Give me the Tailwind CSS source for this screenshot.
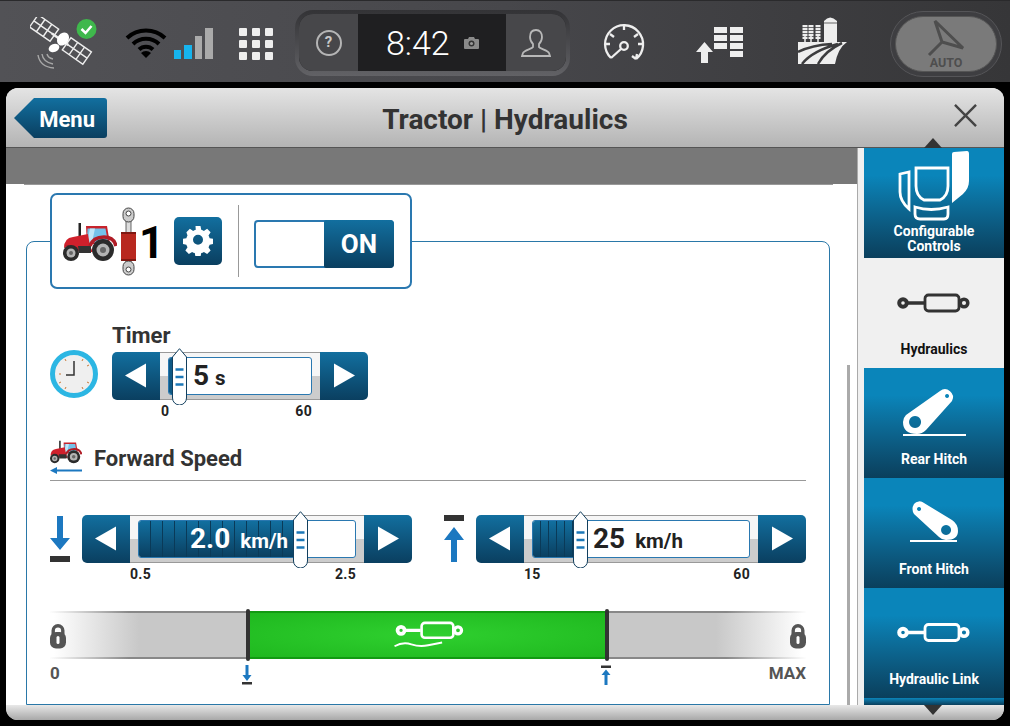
<!DOCTYPE html>
<html>
<head>
<meta charset="utf-8">
<script src="https://cdn.jsdelivr.net/npm/@tailwindcss/browser@4"></script>
</head>
<body class="m-0 bg-black">
<svg class="hidden" width="0" height="0">
  <defs>
    <symbol id="tractor" viewBox="0 0 54 40">
      <rect x="15.500" y="1" width="2.500" height="17" fill="#222"/>
      <path d="M23 4h21l3 18H24z" fill="#c8232c"/>
      <path d="M24.500 6.500h18l2.500 14H24z" fill="#74c2ea"/>
      <path d="M27 6.500h5l-3 14h-5z" fill="#bfe6f7"/>
      <path d="M1 26q0-10 9-11l15-3 2 12 3 6H16Q14 24 6 24z" fill="#d0202c"/>
      <path d="M1 24q6-2 12 1l2 4-2 0q-3-5-9-5z" fill="#a31a24"/>
      <path d="M15 24h13v7H16z" fill="#333"/>
      <path d="M27 24q3-9 14-9 10 0 12 9" fill="none" stroke="#b01c26" stroke-width="3.500"/>
      <circle cx="40" cy="28" r="11" fill="#2b2b2b"/><circle cx="40" cy="28" r="6.500" fill="#b4b4b4"/><circle cx="40" cy="28" r="3" fill="#666"/>
      <circle cx="8" cy="31" r="8" fill="#2b2b2b"/><circle cx="8" cy="31" r="4.500" fill="#b4b4b4"/><circle cx="8" cy="31" r="2" fill="#666"/>
    </symbol>
    <symbol id="cyl" viewBox="0 0 140 20">
      <circle cx="39" cy="10" r="3.800" fill="none" stroke="currentColor" stroke-width="4"/>
      <path d="M43 10h17" stroke="currentColor" stroke-width="3.500"/>
      <rect x="61" y="2" width="34" height="16" rx="3.500" fill="none" stroke="currentColor" stroke-width="2.800"/>
      <path d="M95 10h2" stroke="currentColor" stroke-width="3.500"/>
      <circle cx="100" cy="10" r="3.800" fill="none" stroke="currentColor" stroke-width="3.500"/>
    </symbol>
    <symbol id="thumb" viewBox="0 0 15 57">
      <path d="M.5 9 7.5.7 14.5 9V50a6.500 6.500 0 0 1-14 0z" fill="#fff" stroke="#123f5e"/>
      <path d="M3.500 21.500h8M3.500 29h8M3.500 36.500h8" stroke="#1c78b8" stroke-width="2.500"/>
    </symbol>
    <symbol id="lock" viewBox="0 0 16 26">
      <path d="M3.200 11V7.500a4.800 4.800 0 0 1 9.600 0V11" fill="none" stroke="#555" stroke-width="3.400"/>
      <rect y="9" width="16" height="16.500" rx="6" fill="#555"/>
      <rect x="6.500" y="13" width="3" height="8" rx="1.500" fill="#fff"/>
    </symbol>
    <symbol id="left" viewBox="0 0 48 48"><path d="M13 23.500 34 11.500v24z" fill="#fff"/></symbol>
    <symbol id="right" viewBox="0 0 48 48"><path d="M35 23.500 14 11.500v24z" fill="#fff"/></symbol>
  </defs>
</svg>

<div class="w-[1010px] h-[726px] bg-black overflow-hidden flex flex-col font-['Roboto',sans-serif]">
  <!-- status bar -->
  <div class="h-[82px] shrink-0 relative flex items-center border-t border-[#2a2a2c] bg-linear-to-r from-[#525256] via-[#47474b] to-[#363638]">
    <svg class="ml-[30px] w-[72px] h-[56px] mt-[6px]" viewBox="30 16 72 56" fill="none">
      <g stroke="#eee" stroke-width="1.400">
        <g transform="rotate(35 60.500 38.500)">
          <rect x="28" y="31" width="25" height="15"/><path d="M36.300 31v15M44.600 31v15M28 38.500h25"/>
          <rect x="68" y="31" width="25" height="15"/><path d="M76.300 31v15M84.600 31v15M68 38.500h25"/>
          <path d="M50 38.500h20" stroke-width="2.500"/>
        </g>
      </g>
      <path d="M47 53q1 4 6 5M42 53q1 8 11 10M38 54q2 12 16 13" stroke="#a8a8a8" stroke-width="1.400"/>
      <ellipse cx="63" cy="38" rx="5.500" ry="7" transform="rotate(36 63 38)" fill="#fff"/>
      <ellipse cx="54" cy="47" rx="5.500" ry="4" fill="#fff" transform="rotate(-20 54 47)"/>
      <circle cx="86.500" cy="28" r="10" fill="#3fb84c"/>
      <path d="M81.500 28l4 4 6-7" stroke="#fff" stroke-width="2.500"/>
    </svg>
    <svg class="ml-[23px] w-[42px] h-[32px] mt-[2px]" viewBox="0 0 42 32" fill="none" stroke="#000" stroke-width="4">
      <path d="M2 11a28 28 0 0 1 38 0M8 17a19 19 0 0 1 26 0M14 22.500a10 10 0 0 1 14 0"/>
      <path d="M21 31l-5-5a7 7 0 0 1 10 0z" fill="#000" stroke="none"/>
    </svg>
    <div class="ml-[7px] flex items-end gap-[3px] h-[32px] mt-[2px]">
      <div class="w-[7px] h-[9px] bg-[#16b4ee]"></div>
      <div class="w-[8px] h-[14px] bg-[#16b4ee]"></div>
      <div class="w-[7px] h-[23px] bg-[#aaaaaa]"></div>
      <div class="w-[8px] h-[31px] bg-[#aaaaaa]"></div>
    </div>
    <div class="ml-[26px] grid grid-cols-[8px_8px_8px] gap-x-[5px] gap-y-[4px] mt-[5px]">
      <div class="h-[8px] rounded-[1px] bg-[#eeeeee]"></div><div class="h-[8px] rounded-[1px] bg-[#eeeeee]"></div><div class="h-[8px] rounded-[1px] bg-[#eeeeee]"></div>
      <div class="h-[8px] rounded-[1px] bg-[#eeeeee]"></div><div class="h-[8px] rounded-[1px] bg-[#eeeeee]"></div><div class="h-[8px] rounded-[1px] bg-[#eeeeee]"></div>
      <div class="h-[8px] rounded-[1px] bg-[#eeeeee]"></div><div class="h-[8px] rounded-[1px] bg-[#eeeeee]"></div><div class="h-[8px] rounded-[1px] bg-[#eeeeee]"></div>
    </div>
    <!-- clock pod -->
    <div class="ml-[22px] w-[275px] h-[66px] rounded-[18px] bg-linear-to-b from-[#333336] to-[#626266] p-[4px] pb-[5px] mt-[3px]">
      <div class="w-full h-full rounded-[14px] overflow-hidden flex bg-[#1f1f21]">
        <div class="w-[59px] flex items-center justify-center bg-[#47474a]">
          <div class="w-[26px] h-[26px] rounded-full border-2 border-[#b5b5b5] flex items-center justify-center text-[15px] font-bold text-[#c8c8c8]">?</div>
        </div>
        <div class="flex-1 flex items-center pl-[28px]">
          <span class="text-[34px] font-light leading-none text-white">8:42</span>
          <svg class="ml-[14px] w-[15px] h-[12px]" viewBox="0 0 15 12"><path d="M1 2h3l1-2h5l1 2h3q1 0 1 1v8q0 1-1 1H1q-1 0-1-1V3q0-1 1-1z" fill="#8a8a8a"/><circle cx="7.500" cy="6.500" r="3" fill="#333"/><circle cx="7.500" cy="6.500" r="1.500" fill="#999"/></svg>
        </div>
        <div class="w-[60px] flex items-center justify-center bg-[#47474a]">
          <svg class="w-[30px] h-[28px]" viewBox="0 0 30 28" fill="none" stroke="#b8b8b8" stroke-width="1.800"><path d="M15 1c-4 0-6 3-6 7 0 3 1 5 3 7v3c-1 2-9 3-10 6l-1 3h28l-1-3c-1-3-9-4-10-6v-3c2-2 3-4 3-7 0-4-2-7-6-7z"/></svg>
        </div>
      </div>
    </div>
    <svg class="ml-[33px] w-[42px] h-[40px] mt-[3px]" viewBox="0 0 42 40" fill="none" stroke="#eee" stroke-width="2.300">
      <path d="M8 35A19 19 0 1 1 33 36M33 36l-4-3M33 36l1-5"/><path d="M21 2v5M7 11l4 3M35 11l-4 3M2 21h5M40 21h-5"/>
      <circle cx="21" cy="23" r="3.800"/><path d="M18 26 8 35"/>
    </svg>
    <div class="ml-[51px] flex items-end mt-[0px]">
      <svg class="w-[17px] h-[21px] mb-[-6px]" viewBox="0 0 17 21"><path d="M8.500 0 17 10h-5v11H5V10H0z" fill="#eee"/></svg>
      <div class="ml-[1px] grid grid-cols-[13px_13px] gap-x-[3px] gap-y-[2px]">
        <div class="h-[6px] bg-[#eeeeee]"></div><div class="h-[6px] bg-[#eeeeee]"></div>
        <div class="h-[6px] bg-[#eeeeee]"></div><div class="h-[6px] bg-[#eeeeee]"></div>
        <div class="h-[6px] bg-[#eeeeee]"></div><div class="h-[6px] bg-[#eeeeee]"></div>
        <div class="h-[6px]"></div><div class="h-[6px] bg-[#eeeeee]"></div>
      </div>
    </div>
    <svg class="ml-[55px] w-[50px] h-[48px] mt-[-3px]" viewBox="0 0 50 48">
      <path d="M26 5Q32-2 39 5V29H26z" fill="#eee"/>
      <path d="M26 7h13" stroke="#666" stroke-width="1"/>
      <path d="M7 20v6M13 20v6M20 20v6" stroke="#eee" stroke-width="1.500"/>
      <path d="M7 9v14M13 9v14M20 9v14" stroke="#eee" stroke-width="5" stroke-dasharray="2.200 .8"/>
      <path d="M0 26H49Q40 32 37 48H0z" fill="#eee"/>
      <path d="M0 36Q14 29 34 28M4 48Q14 35 40 28M20 48Q27 35 44 27" fill="none" stroke="#3c3c3e" stroke-width="2.500"/>
    </svg>
    <div class="ml-[42px] w-[112px] h-[66px] rounded-full bg-[#3e3e41] border border-[#555558] p-[4px] mt-[4px]">
      <div class="w-full h-full rounded-full bg-[#7a7a7a] border border-[#555] flex flex-col items-center">
        <svg class="w-[38px] h-[40px] mt-[1px]" viewBox="0 0 38 40" fill="none" stroke="#4e4e4e" stroke-width="3"><path d="M8 3 36 30 15 24zM15 24 2 37"/></svg>
        <span class="text-[12.500px] font-bold leading-none text-[#4e4e4e] mt-[-1px]">AUTO</span>
      </div>
    </div>
  </div>

  <!-- panel -->
  <div class="ml-[6px] mt-[6px] w-[998px] h-[632px] rounded-[12px] overflow-hidden relative flex flex-col bg-[#eeeeee]">
    <div class="h-[60px] shrink-0 grid grid-cols-[1fr_auto_1fr] items-center bg-linear-to-b from-[#e4e4e4] to-[#b4b4b4] border-b border-[#555]">
      <div class="pl-[8px]">
        <div class="relative w-[93px] h-[40px] flex items-center justify-end pr-[12px]">
          <svg class="absolute inset-0 w-[93px] h-[40px]" viewBox="0 0 93 40">
            <defs><linearGradient id="mg" x1="0" y1="0" x2="0" y2="1"><stop offset="0" stop-color="#126f9f"/><stop offset="1" stop-color="#0a3f60"/></linearGradient></defs>
            <path d="M0 20 20 0H90q3 0 3 3V37q0 3-3 3H20z" fill="url(#mg)"/>
          </svg>
          <span class="relative mt-[4px] text-[22px] font-bold leading-none text-white">Menu</span>
        </div>
      </div>
      <div class="mt-[5px] text-[28px] font-bold leading-none text-[#333333]">Tractor | Hydraulics</div>
      <div class="flex justify-end pr-[27px]">
        <svg class="w-[23px] h-[23px] mt-[-4px]" viewBox="0 0 24 24" stroke="#444" stroke-width="2.500"><path d="M1 1l22 22M23 1 1 23"/></svg>
      </div>
    </div>

    <div class="flex h-[557px] shrink-0">
      <!-- main -->
      <div class="w-[851px] h-full relative bg-white">
        <div class="h-[36px] bg-[#787878]"></div>
        <div class="ml-[18px] w-[809px] h-px bg-[#999999]"></div>
        <div class="pl-[20px]">
          <div class="mt-[56px] w-[804px] h-[464px] rounded-t-[8px] border border-[#2a78a8] px-[23px]">
            <!-- header box -->
            <div class="-mt-[49px] w-[362px] h-[96px] rounded-[7px] border-2 border-[#2a78b0] bg-white flex items-center pl-[11px]">
              <svg class="w-[54px] h-[40px] mt-[2px]"><use href="#tractor"/></svg>
              <svg class="ml-[4px] w-[15px] h-[69px]" viewBox="0 0 15 69">
                <rect x="5" y="8" width="5" height="54" fill="#ddd" stroke="#444" stroke-width=".8"/>
                <rect x="2" y="1" width="11" height="14" rx="5.500" fill="#ccc" stroke="#444"/>
                <rect x="2" y="54" width="11" height="14" rx="5.500" fill="#ccc" stroke="#444"/>
                <circle cx="7.500" cy="6.500" r="2.500" fill="#fff" stroke="#444"/><circle cx="7.500" cy="62.500" r="2.500" fill="#fff" stroke="#444"/>
                <rect y="25" width="15" height="29" rx="1" fill="#b8281f"/>
                <rect y="25" width="15" height="2" fill="#7f1812"/><rect y="52" width="15" height="2" fill="#7f1812"/>
              </svg>
              <span class="ml-[3px] mt-[4px] w-[22px] text-[44px] font-bold leading-none text-black">1</span>
              <div class="ml-[13px] w-[48px] h-[48px] rounded-[5px] bg-linear-to-b from-[#126f9f] to-[#0a3f60] flex items-center justify-center">
                <svg class="w-[30px] h-[30px]" viewBox="0 0 24 24" fill="#fff"><path fill-rule="evenodd" d="M10 1h4l.6 3a8.500 8.500 0 0 1 2.100.9l2.600-1.700 2.800 2.800-1.700 2.600a8.500 8.500 0 0 1 .9 2.100l3 .6v4l-3 .6a8.500 8.500 0 0 1-.9 2.100l1.700 2.600-2.800 2.800-2.600-1.700a8.500 8.500 0 0 1-2.100.9l-.6 3h-4l-.6-3a8.500 8.500 0 0 1-2.100-.9l-2.600 1.700-2.800-2.800 1.700-2.600a8.500 8.500 0 0 1-.9-2.100l-3-.6v-4l3-.6a8.500 8.500 0 0 1 .9-2.100L2.700 6 5.500 3.200l2.600 1.700a8.500 8.500 0 0 1 2.100-.9zM12 8a4 4 0 1 0 0 8 4 4 0 0 0 0-8z" transform="translate(0 -1)"/></svg>
              </div>
              <div class="ml-[16px] w-px h-[72px] bg-[#999]"></div>
              <div class="ml-[15px] mt-[6px] w-[140px] h-[48px] rounded-[4px] border-2 border-[#2a78b0] bg-white flex justify-end relative">
                <div class="w-[70px] -my-[2px] -mr-[2px] rounded-r-[4px] rounded-l-[2px] bg-linear-to-b from-[#126f9f] to-[#0a3f60] flex items-center justify-center text-[26px] font-bold leading-none text-white">ON</div>
              </div>
            </div>

            <!-- timer -->
            <div class="mt-[35px] flex">
              <svg class="mt-[26px] w-[48px] h-[48px]" viewBox="0 0 48 48">
                <circle cx="24" cy="24" r="21.500" fill="#efefef" stroke="#2cb6e3" stroke-width="5"/>
                <path d="M24 11v14h-8" fill="none" stroke="#333" stroke-width="1.500"/>
                <path d="M33 9l-1 2M39 15l-2 1M39 33l-2-1M33 39l-1-2M15 39l1-2M9 33l2-1M9 24h2M15 9l1 2" stroke="#c97a3a" stroke-width="1"/>
              </svg>
              <div class="ml-[14px] w-[256px]">
                <div class="h-[28px] text-[22px] font-bold leading-none text-[#333333] pt-[1px]">Timer</div>
                <div class="relative h-[48px] flex">
                  <div class="w-[48px] rounded-l-[5px] bg-linear-to-b from-[#126f9f] to-[#0a3f60]"><svg class="w-[48px] h-[48px]"><use href="#left"/></svg></div>
                  <div class="flex-1 px-[8px] py-[4px] border-y border-[#999] bg-linear-to-b from-[#f6f6f6] from-50% to-[#cccccc] to-50%">
                    <div class="relative h-full rounded-[3px] border border-[#2a78b0] bg-white overflow-hidden">
                      <div class="absolute left-0 top-0 bottom-0 w-[8px] bg-[#0f5a86]"></div>
                      <div class="relative flex items-baseline pl-[24px] h-full leading-[36px] text-[#222222]">
                        <span class="text-[28px] font-bold">5</span><span class="ml-[6px] text-[20.500px] font-bold">s</span>
                      </div>
                    </div>
                  </div>
                  <div class="w-[48px] rounded-r-[5px] bg-linear-to-b from-[#126f9f] to-[#0a3f60]"><svg class="w-[48px] h-[48px]"><use href="#right"/></svg></div>
                  <svg class="absolute left-[60px] top-[-4px] w-[15px] h-[57px]"><use href="#thumb"/></svg>
                </div>
                <div class="h-[22px] flex justify-between items-center pl-[49px] pr-[56px] text-[14px] font-bold leading-none text-[#222222] tracking-[0.3px]"><span>0</span><span>60</span></div>
              </div>
            </div>

            <!-- forward speed -->
            <div class="mt-[18px] h-[41px] border-b border-[#999] flex items-start">
              <div class="w-[32px] flex flex-col">
                <svg class="w-[32px] h-[24px]"><use href="#tractor"/></svg>
                <svg class="w-[32px] h-[7px] mt-[3px]" viewBox="0 0 32 7"><path d="M0 3.500 7 0v2.500h25v2H7V7z" fill="#1c78c0"/></svg>
              </div>
              <span class="ml-[12px] mt-[8px] text-[22px] font-bold leading-none text-[#333333]">Forward Speed</span>
            </div>

            <!-- speed sliders -->
            <div class="mt-[34px] flex gap-[32px]">
              <div class="flex w-[362px]">
                <div class="w-[32px] flex justify-start">
                  <svg class="w-[20px] h-[48px]" viewBox="0 0 20 48"><path d="M7 1h6v22h7L10 35 0 23h7z" fill="#1c78c0"/><rect y="41" width="20" height="6" fill="#333"/></svg>
                </div>
                <div class="w-[330px]">
                  <div class="relative h-[48px] flex">
                    <div class="w-[48px] rounded-l-[5px] bg-linear-to-b from-[#126f9f] to-[#0a3f60]"><svg class="w-[48px] h-[48px]"><use href="#left"/></svg></div>
                    <div class="flex-1 px-[8px] py-[4px] border-y border-[#999] bg-linear-to-b from-[#f6f6f6] from-50% to-[#cccccc] to-50%">
                      <div class="relative h-full rounded-[3px] border border-[#2a78b0] bg-white overflow-hidden">
                        <div class="absolute left-0 top-0 bottom-0 w-[162px] bg-[repeating-linear-gradient(90deg,transparent_0,transparent_11px,#0a3a58_11px,#0a3a58_12px),linear-gradient(#126f9f,#0a3f60)]"></div>
                        <div class="relative flex items-baseline pl-[51px] h-full leading-[36px] text-white">
                          <span class="text-[28px] font-bold">2.0</span><span class="ml-[10px] text-[20.500px] font-bold">km/h</span>
                        </div>
                      </div>
                    </div>
                    <div class="w-[48px] rounded-r-[5px] bg-linear-to-b from-[#126f9f] to-[#0a3f60]"><svg class="w-[48px] h-[48px]"><use href="#right"/></svg></div>
                    <svg class="absolute left-[211px] top-[-4px] w-[15px] h-[57px]"><use href="#thumb"/></svg>
                  </div>
                  <div class="h-[22px] flex justify-between items-center pl-[48px] pr-[56px] text-[14px] font-bold leading-none text-[#222222] tracking-[0.3px]"><span>0.5</span><span>2.5</span></div>
                </div>
              </div>
              <div class="flex w-[362px]">
                <div class="w-[32px] flex justify-start">
                  <svg class="w-[20px] h-[48px]" viewBox="0 0 20 48"><rect y="0" width="20" height="6" fill="#333"/><path d="M7 47h6V25h7L10 12 0 25h7z" fill="#1c78c0"/></svg>
                </div>
                <div class="w-[330px]">
                  <div class="relative h-[48px] flex">
                    <div class="w-[48px] rounded-l-[5px] bg-linear-to-b from-[#126f9f] to-[#0a3f60]"><svg class="w-[48px] h-[48px]"><use href="#left"/></svg></div>
                    <div class="flex-1 px-[8px] py-[4px] border-y border-[#999] bg-linear-to-b from-[#f6f6f6] from-50% to-[#cccccc] to-50%">
                      <div class="relative h-full rounded-[3px] border border-[#2a78b0] bg-white overflow-hidden">
                        <div class="absolute left-0 top-0 bottom-0 w-[48px] bg-[repeating-linear-gradient(90deg,transparent_0,transparent_7px,#0a3a58_7px,#0a3a58_8px),linear-gradient(#126f9f,#0a3f60)]"></div>
                        <div class="relative flex items-baseline pl-[60px] h-full leading-[36px] text-[#222222]">
                          <span class="text-[28px] font-bold">25</span><span class="ml-[10px] text-[20.500px] font-bold">km/h</span>
                        </div>
                      </div>
                    </div>
                    <div class="w-[48px] rounded-r-[5px] bg-linear-to-b from-[#126f9f] to-[#0a3f60]"><svg class="w-[48px] h-[48px]"><use href="#right"/></svg></div>
                    <svg class="absolute left-[97px] top-[-4px] w-[15px] h-[57px]"><use href="#thumb"/></svg>
                  </div>
                  <div class="h-[22px] flex justify-between items-center pl-[48px] pr-[56px] text-[14px] font-bold leading-none text-[#222222] tracking-[0.3px]"><span>15</span><span>60</span></div>
                </div>
              </div>
            </div>

            <!-- range bar -->
            <div class="mt-[26px] h-[48px] relative flex">
              <div class="w-[198px] border-y-2 border-[#999] bg-linear-to-r from-white from-2% via-[#c8c8c8] via-45% to-[#c8c8c8] [border-image:linear-gradient(90deg,#fff,#888_40%)_1]"></div>
              <div class="w-[358px] bg-[radial-gradient(ellipse_at_center,#2fd02f_0%,#1fb81f_100%)] border-y-2 border-[#129a12] flex items-center justify-center">
                <svg class="ml-[6px] w-[84px] h-[34px] text-white" viewBox="25 0 90 36" fill="none"><use href="#cyl" x="0" y="3" width="140" height="20"/><path d="M32 30q9-5 18-2t18 1 15-3" stroke="#fff" stroke-width="2"/></svg>
              </div>
              <div class="flex-1 border-y-2 border-[#999] bg-linear-to-l from-white from-2% via-[#c8c8c8] via-45% to-[#c8c8c8] [border-image:linear-gradient(270deg,#fff,#888_40%)_1]"></div>
              <div class="absolute left-[196px] top-[-2px] w-[4px] h-[52px] rounded-[2px] bg-[#333]"></div>
              <div class="absolute left-[555px] top-[-2px] w-[4px] h-[52px] rounded-[2px] bg-[#333]"></div>
              <svg class="absolute left-0 top-[12px] w-[16px] h-[26px]"><use href="#lock"/></svg>
              <svg class="absolute right-0 top-[12px] w-[16px] h-[26px]"><use href="#lock"/></svg>
            </div>
            <div class="relative h-[30px] flex justify-between items-start pt-[6px] text-[17px] font-bold leading-none text-[#555555]">
              <span>0</span><span>MAX</span>
              <svg class="absolute left-[192px] top-[6px] w-[10px] h-[20px]" viewBox="0 0 10 20"><path d="M3.500 0h3v10h3l-4.500 6-4.500-6h3z" fill="#1c78c0"/><rect y="17" width="10" height="2.500" fill="#333"/></svg>
              <svg class="absolute left-[551px] top-[6px] w-[10px] h-[20px]" viewBox="0 0 10 20"><rect y=".5" width="10" height="2.500" fill="#333"/><path d="M3.500 20h3V10h3L5 4.500.5 10h3z" fill="#1c78c0"/></svg>
            </div>
          </div>
        </div>
        <div class="absolute left-[841px] top-[217px] bottom-0 w-[3px] bg-[#aaaaaa]"></div>
      </div>

      <!-- sidebar -->
      <div class="w-[147px] h-full border-l border-[#aaa] bg-[#f0f0f0] pl-[6px] overflow-hidden flex flex-col">
        <div class="h-[110px] shrink-0 flex flex-col items-center bg-linear-to-b from-[#0a85ba] from-25% to-[#0a3f5c]">
          <svg class="w-[140px] h-[76px] shrink-0" viewBox="0 0 140 76" fill="none" stroke="#fff" stroke-width="2.800">
            <path d="M88 6q0-2 2-2L103 3q2 0 2 3v27c0 5-2 9-6 13l-11 9z" fill="#fff" stroke="none"/>
            <path d="M52 20H84V38Q84 48 76 52H60Q52 48 52 38z"/>
            <path d="M51 59Q67 64 84 59V66Q84 71 80 71H56Q51 71 51 66z"/>
            <path d="M36 26l9-2v37q-9-8-9-17z"/>
          </svg>
          <span class="text-[14px] font-bold leading-[15px] text-white text-center">Configurable<br>Controls</span>
        </div>
        <div class="h-[110px] shrink-0 flex flex-col items-center bg-[#f0f0f0]">
          <svg class="w-[140px] h-[83px] shrink-0 text-[#333333]" viewBox="0 0 140 83"><use href="#cyl" x="0" y="35" width="140" height="20"/></svg>
          <span class="text-[14px] font-bold leading-[16px] text-[#111111]">Hydraulics</span>
        </div>
        <div class="h-[110px] shrink-0 flex flex-col items-center bg-linear-to-b from-[#0a85ba] from-25% to-[#0a3f5c]">
          <svg class="w-[140px] h-[83px] shrink-0" viewBox="0 0 140 83" fill="#fff">
            <path fill-rule="evenodd" d="M42 47 76 23a8 8 0 0 1 12 10L62 62q-4 4-9 4-14 0-14-12 0-4 3-7zM51 48a6 6 0 1 0 .1 0zM83 26a2 2 0 1 0 .1 0z"/>
            <rect x="39" y="66" width="63" height="2"/>
          </svg>
          <span class="text-[14px] font-bold leading-[16px] text-white">Rear Hitch</span>
        </div>
        <div class="h-[110px] shrink-0 flex flex-col items-center bg-linear-to-b from-[#0a85ba] from-25% to-[#0a3f5c]">
          <svg class="w-[140px] h-[83px] shrink-0" viewBox="0 0 140 83" fill="#fff">
            <path fill-rule="evenodd" d="M50 26a7 7 0 0 1 10-1l28 17q6 4 6 11 0 9-12 9-4 0-7-3L50 36q-3-5 0-10zM82 47a5 5 0 1 0 .1 0zM55 29a2 2 0 1 0 .1 0z"/>
            <rect x="46" y="62" width="47" height="2"/>
          </svg>
          <span class="text-[14px] font-bold leading-[16px] text-white">Front Hitch</span>
        </div>
        <div class="h-[110px] shrink-0 flex flex-col items-center bg-linear-to-b from-[#0a85ba] from-25% to-[#0a3f5c]">
          <svg class="w-[140px] h-[83px] shrink-0 text-white" viewBox="0 0 140 83"><use href="#cyl" x="0" y="34.500" width="140" height="20"/></svg>
          <span class="text-[14px] font-bold leading-[16px] text-white">Hydraulic Link</span>
        </div>
        <div class="h-[7px] shrink-0 bg-linear-to-b from-[#0a85ba] to-[#0a3f5c]"></div>
      </div>
    </div>
    <div class="flex-1 bg-linear-to-b from-[#e8e8e8] to-[#a8a8a8]"></div>

    <!-- sidebar scroll arrows -->
    <svg class="absolute left-[918px] top-[50px] w-[18px] h-[10px]" viewBox="0 0 18 10"><path d="M9 0 18 10H0z" fill="#333"/></svg>
    <svg class="absolute left-[918px] top-[617px] w-[18px] h-[10px]" viewBox="0 0 18 10"><path d="M9 10 18 0H0z" fill="#333"/></svg>
  </div>
</div>
</body>
</html>
